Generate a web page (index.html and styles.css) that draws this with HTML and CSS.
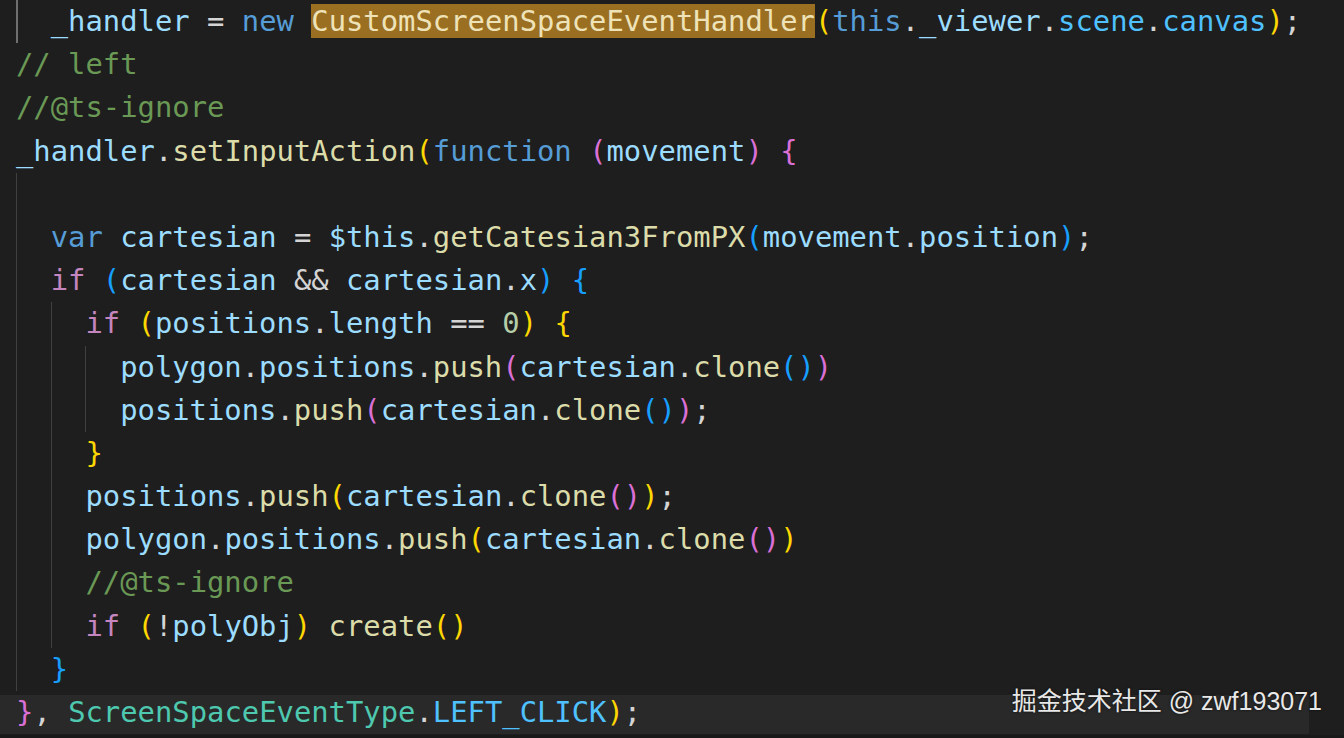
FILE: index.html
```html
<!DOCTYPE html>
<html lang="zh">
<head>
<meta charset="utf-8">
<title>editor</title>
<link rel="stylesheet" href="styles.css">
</head>
<body>
<div class="editor">
  <div class="code">
    <div class="line"><span class="ind act"></span><span class="src"><span class="v">_handler</span> <span class="o">=</span> <span class="k">new</span> <span class="hl">CustomScreenSpaceEventHandler</span><span class="b1">(</span><span class="k">this</span><span class="o">.</span><span class="v">_viewer</span><span class="o">.</span><span class="p">scene</span><span class="o">.</span><span class="p">canvas</span><span class="b1">)</span><span class="o">;</span></span></div>
    <div class="line"><span class="src"><span class="cm">// left</span></span></div>
    <div class="line"><span class="src"><span class="cm">//@ts-ignore</span></span></div>
    <div class="line"><span class="src"><span class="v">_handler</span><span class="o">.</span><span class="f">setInputAction</span><span class="b1">(</span><span class="k">function</span> <span class="b2">(</span><span class="v">movement</span><span class="b2">)</span> <span class="b2">{</span></span></div>
    <div class="line"><span class="ind"></span><span class="src"></span></div>
    <div class="line"><span class="ind"></span><span class="src"><span class="k">var</span> <span class="v">cartesian</span> <span class="o">=</span> <span class="v">$this</span><span class="o">.</span><span class="f">getCatesian3FromPX</span><span class="b3">(</span><span class="v">movement</span><span class="o">.</span><span class="v">position</span><span class="b3">)</span><span class="o">;</span></span></div>
    <div class="line"><span class="ind"></span><span class="src"><span class="c">if</span> <span class="b3">(</span><span class="v">cartesian</span> <span class="o">&amp;&amp;</span> <span class="v">cartesian</span><span class="o">.</span><span class="v">x</span><span class="b3">)</span> <span class="b3">{</span></span></div>
    <div class="line"><span class="ind"></span><span class="ind"></span><span class="src"><span class="c">if</span> <span class="b1">(</span><span class="v">positions</span><span class="o">.</span><span class="v">length</span> <span class="o">==</span> <span class="n">0</span><span class="b1">)</span> <span class="b1">{</span></span></div>
    <div class="line"><span class="ind"></span><span class="ind"></span><span class="ind"></span><span class="src"><span class="v">polygon</span><span class="o">.</span><span class="v">positions</span><span class="o">.</span><span class="f">push</span><span class="b2">(</span><span class="v">cartesian</span><span class="o">.</span><span class="f">clone</span><span class="b3">()</span><span class="b2">)</span></span></div>
    <div class="line"><span class="ind"></span><span class="ind"></span><span class="ind"></span><span class="src"><span class="v">positions</span><span class="o">.</span><span class="f">push</span><span class="b2">(</span><span class="v">cartesian</span><span class="o">.</span><span class="f">clone</span><span class="b3">()</span><span class="b2">)</span><span class="o">;</span></span></div>
    <div class="line"><span class="ind"></span><span class="ind"></span><span class="src"><span class="b1">}</span></span></div>
    <div class="line"><span class="ind"></span><span class="ind"></span><span class="src"><span class="v">positions</span><span class="o">.</span><span class="f">push</span><span class="b1">(</span><span class="v">cartesian</span><span class="o">.</span><span class="f">clone</span><span class="b2">()</span><span class="b1">)</span><span class="o">;</span></span></div>
    <div class="line"><span class="ind"></span><span class="ind"></span><span class="src"><span class="v">polygon</span><span class="o">.</span><span class="v">positions</span><span class="o">.</span><span class="f">push</span><span class="b1">(</span><span class="v">cartesian</span><span class="o">.</span><span class="f">clone</span><span class="b2">()</span><span class="b1">)</span></span></div>
    <div class="line"><span class="ind"></span><span class="ind"></span><span class="src"><span class="cm">//@ts-ignore</span></span></div>
    <div class="line"><span class="ind"></span><span class="ind"></span><span class="src"><span class="c">if</span> <span class="b1">(</span><span class="o">!</span><span class="v">polyObj</span><span class="b1">)</span> <span class="f">create</span><span class="b1">()</span></span></div>
    <div class="line"><span class="ind"></span><span class="src"><span class="b3">}</span></span></div>
    <div class="line current"><span class="src"><span class="b2">}</span><span class="o">,</span> <span class="t">ScreenSpaceEventType</span><span class="o">.</span><span class="p">LEFT_CLICK</span><span class="b1">)</span><span class="o">;</span></span></div>
  </div>
  <div class="rail"></div>
</div>
<div class="watermark">掘金技术社区 @ zwf193071</div>
</body>
</html>
```
FILE: styles.css
```css
html, body {
  margin: 0;
  padding: 0;
  background: #1e1e1e;
  height: 100%;
  overflow: hidden;
}

.editor {
  display: flex;
  height: 735px;
  border-bottom: 3px solid #191919;
}

.code {
  flex: 1;
  display: flex;
  flex-direction: column;
  font-family: "DejaVu Sans Mono", "Liberation Mono", monospace;
  font-size: 28.85px;
  color: #d4d4d4;
}

.rail {
  width: 35px;
  background: #1e1e1e;
}

.line {
  display: flex;
  height: 43.2px;
  line-height: 43.2px;
  padding-left: 16px;
}

.line.current {
  background: #292929;
  box-shadow: inset 0 4px 0 #1e1e1e;
}

.ind {
  width: 2ch;
  flex: none;
  box-shadow: inset 1px 0 0 #404040;
}

.ind.act {
  box-shadow: inset 2px 0 0 #6f6f6f;
}

.src {
  white-space: pre;
}

.v { color: #9cdcfe; }
.p { color: #4fc1ff; }
.k { color: #569cd6; }
.c { color: #c586c0; }
.f { color: #dcdcaa; }
.t { color: #4ec9b0; }
.n { color: #b5cea8; }
.o { color: #d4d4d4; }
.cm { color: #6a9955; }
.b1 { color: #ffd700; }
.b2 { color: #da70d6; }
.b3 { color: #179fff; }

.hl {
  background: #9b6f22;
  color: #eee3b8;
}

.watermark {
  position: absolute;
  right: 22px;
  bottom: 22px;
  font-family: "Liberation Sans", "Noto Sans CJK SC", sans-serif;
  font-size: 25px;
  line-height: 30px;
  color: #e8e8e8;
  text-shadow: 0 0 3px rgba(0, 0, 0, 0.7);
}
```
